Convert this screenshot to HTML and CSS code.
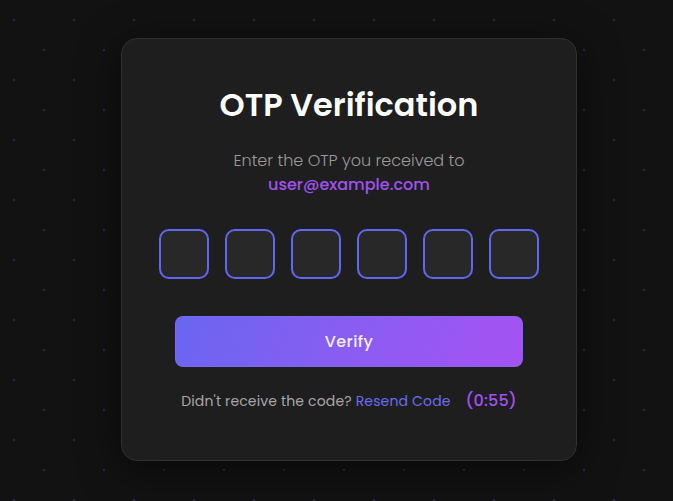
FILE: index.html
```html
<!DOCTYPE html>
<html lang="en">
<head>
<meta charset="utf-8">
<title>OTP Verification</title>
<link rel="stylesheet" href="styles.css">
</head>
<body>
  <main class="page">
    <section class="card">
      <h1 class="title">OTP Verification</h1>
      <p class="subtitle">Enter the OTP you received to<br><span class="email">user@example.com</span></p>
      <div class="otp-row">
        <input class="otp-box" type="text" maxlength="1">
        <input class="otp-box" type="text" maxlength="1">
        <input class="otp-box" type="text" maxlength="1">
        <input class="otp-box" type="text" maxlength="1">
        <input class="otp-box" type="text" maxlength="1">
        <input class="otp-box" type="text" maxlength="1">
      </div>
      <button class="verify-btn" type="button">Verify</button>
      <p class="resend">Didn't receive the code? <a class="resend-link" href="#">Resend Code</a><span class="timer">(0:55)</span></p>
    </section>
  </main>
</body>
</html>
```

FILE: styles.css
```css
* { box-sizing: border-box; }

html, body {
  margin: 0;
  height: 100%;
}

body {
  font-family: "Poppins", "Open Sans", "Noto Sans", sans-serif;
  background-color: #121212;
  background-image:
    radial-gradient(circle, rgba(90, 80, 160, 0.35) 0 1px, transparent 1.6px),
    radial-gradient(circle, rgba(90, 80, 160, 0.35) 0 1px, transparent 1.6px);
  background-size: 60px 60px, 60px 60px;
  background-position: -16px -10px, 14px 20px;
}

.page {
  height: 100%;
  display: flex;
  align-items: center;
  justify-content: center;
  padding-left: 25px;
  padding-bottom: 2px;
}

.card {
  width: 456px;
  height: 423px;
  background: #1e1e1e;
  border: 1px solid #303030;
  border-radius: 16px;
  box-shadow: 0 8px 40px rgba(0, 0, 0, 0.55);
  padding: 47px 0 0;
  display: flex;
  flex-direction: column;
  align-items: center;
}

.title {
  margin: 0;
  font-size: 32px;
  line-height: 38px;
  font-weight: 600;
  color: #ffffff;
}

.subtitle {
  margin: 25px 0 0;
  font-size: 16px;
  line-height: 24px;
  font-weight: 300;
  color: #9a9a9a;
  text-align: center;
}

.email {
  color: #a152ee;
  font-weight: 500;
}

.otp-row {
  margin-top: 32px;
  display: flex;
  gap: 16px;
}

.otp-box {
  width: 50px;
  height: 50px;
  border: 2px solid #6366f1;
  border-radius: 10px;
  background: #282828;
  color: #fff;
  font-size: 20px;
  text-align: center;
  outline: none;
  padding: 0;
}

.verify-btn {
  margin-top: 37px;
  width: 348px;
  height: 51px;
  border: 1px solid rgba(120, 110, 240, 0.6);
  border-radius: 8px;
  background: linear-gradient(110deg, #6a66f2 0%, #8c5cf1 55%, #a552f2 100%);
  color: #f2ecff;
  font-family: inherit;
  font-size: 16px;
  font-weight: 500;
  letter-spacing: 0.4px;
  cursor: pointer;
}

.resend {
  margin: 23px 0 0;
  font-size: 14px;
  line-height: 22px;
  color: #a8a8a8;
  letter-spacing: 0.15px;
}

.resend-link {
  color: #6d6cf0;
  text-decoration: none;
}

.timer {
  margin-left: 15px;
  font-size: 16px;
  font-weight: 500;
  color: #a152ee;
}
```
